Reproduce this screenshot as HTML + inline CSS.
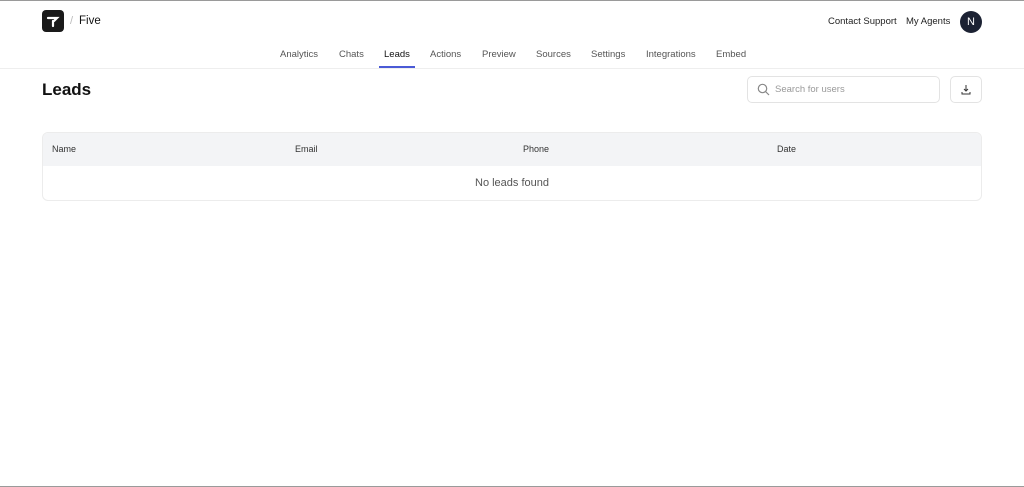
<!DOCTYPE html>
<html><head><style>
*{box-sizing:border-box;margin:0;padding:0}
body{width:1024px;height:487px;background:#fff;font-family:"Liberation Sans",sans-serif;color:#111;position:relative;overflow:hidden}
.abs{position:absolute}
.nav a{position:absolute;top:49px;font-size:9.5px;color:#555;text-decoration:none}
</style></head><body>
<div class="abs" style="left:0;top:0;width:1024px;height:1px;background:#9a9a9a"></div>
<div class="abs" style="left:0;top:486px;width:1024px;height:1px;background:#9a9a9a"></div>
<div class="abs" style="left:42px;top:10px;width:22px;height:22px;background:#1a1a1a;border-radius:4px">
<svg width="22" height="22" viewBox="0 0 22 22"><path d="M6 8h9l-3 3M11 11v5" stroke="#fff" stroke-width="2.2" fill="none" stroke-linecap="round"/></svg></div>
<div class="abs" style="left:70px;top:15px;font-size:11px;color:#bbb">/</div>
<div class="abs" style="left:79px;top:15px;font-size:11.5px;color:#111">Five</div>
<div class="abs" style="left:828px;top:16px;font-size:9.5px;color:#222">Contact Support</div>
<div class="abs" style="left:906px;top:16px;font-size:9.5px;color:#222">My Agents</div>
<div class="abs" style="left:960px;top:11px;width:22px;height:22px;border-radius:50%;background:#1c2233;color:#fff;font-size:11px;text-align:center;line-height:22px">N</div>
<div class="nav">
<a style="left:280px">Analytics</a><a style="left:339px">Chats</a><a style="left:384px;color:#111">Leads</a><a style="left:430px">Actions</a><a style="left:482px">Preview</a><a style="left:536px">Sources</a><a style="left:591px">Settings</a><a style="left:646px">Integrations</a><a style="left:716px">Embed</a>
</div>
<div class="abs" style="left:379px;top:66px;width:36px;height:2px;background:#4a5ad6"></div>
<div class="abs" style="left:0;top:68px;width:1024px;height:1px;background:#eee"></div>
<div class="abs" style="left:42px;top:80px;font-size:17px;font-weight:bold">Leads</div>
<div class="abs" style="left:747px;top:76px;width:193px;height:27px;border:1px solid #e3e3e3;border-radius:5px">
<svg class="abs" style="left:9px;top:6px" width="13" height="13" viewBox="0 0 13 13"><circle cx="5.5" cy="5.5" r="4.2" stroke="#888" fill="none" stroke-width="1.2"/><path d="M8.5 8.5l3.5 3.5" stroke="#888" stroke-width="1.2"/></svg>
<span class="abs" style="left:27px;top:7px;font-size:9.5px;color:#999">Search for users</span></div>
<div class="abs" style="left:950px;top:76px;width:32px;height:27px;border:1px solid #e3e3e3;border-radius:5px">
<svg class="abs" style="left:9px;top:7px" width="12" height="12" viewBox="0 0 12 12"><path d="M6 1v6M4 5l2 2 2-2M2 8v2h8V8" stroke="#333" fill="none" stroke-width="1"/></svg></div>
<div class="abs" style="left:42px;top:132px;width:940px;height:69px;border:1px solid #ececec;border-radius:6px;overflow:hidden">
<div style="height:33px;background:#f3f4f6;position:relative;font-size:9px;color:#333">
<span class="abs" style="left:9px;top:11px">Name</span><span class="abs" style="left:252px;top:11px">Email</span><span class="abs" style="left:480px;top:11px">Phone</span><span class="abs" style="left:734px;top:11px">Date</span></div>
<div style="text-align:center;font-size:11px;color:#555;padding-top:11px">No leads found</div>
</div>
</body></html>
